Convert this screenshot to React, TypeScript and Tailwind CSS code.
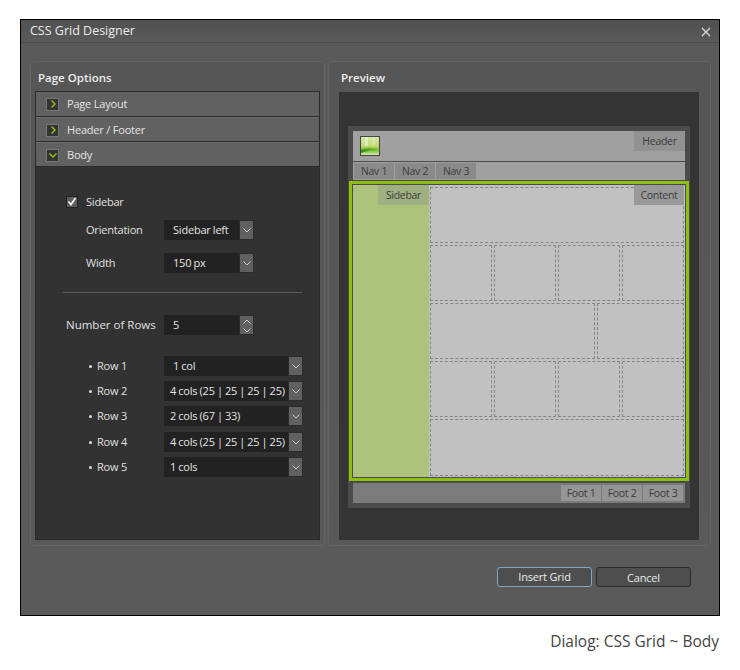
import React from 'react';

const Chevron = ({ dir, color = '#c8c8c8', w = 1 }: { dir: 'right' | 'down' | 'up'; color?: string; w?: number }) => {
  const d = dir === 'right' ? 'M3.5 1.5 L7 5 L3.5 8.5' : dir === 'down' ? 'M1.5 3.5 L5 7 L8.5 3.5' : 'M1.5 6.5 L5 3 L8.5 6.5';
  return (
    <svg width="10" height="10" viewBox="0 0 10 10" fill="none">
      <path d={d} stroke={color} strokeWidth={w} />
    </svg>
  );
};

const AccordionRow = ({ label, open }: { label: string; open?: boolean }) => (
  <div className="flex h-[25px] items-center gap-[8px] border-b border-b-[#2b2b2b] border-t border-t-[#6e6e6e] bg-[#616161] pl-[10px] first:border-t-0 not-first:pt-px">
    <div className="flex h-[13px] w-[13px] items-center justify-center border border-[#777] bg-[#333]">
      <Chevron dir={open ? 'down' : 'right'} color="#90c810" w={1.4} />
    </div>
    <span className="text-[#e4e4e4]">{label}</span>
  </div>
);

const Select = ({ value, width, pad = 6 }: { value: string; width: string; pad?: number }) => (
  <div className={`flex h-[20px] items-stretch bg-[#222] ${width}`}>
    <span className="flex-1 whitespace-nowrap leading-[19px] text-[#e4e4e4] [word-spacing:-0.5px]" style={{ paddingLeft: pad }}>
      {value}
    </span>
    <div className="flex w-[15px] items-center justify-center border border-[#2c2c2c] bg-[#606060]">
      <Chevron dir="down" />
    </div>
  </div>
);

const RowOption = ({ label, value, pad }: { label: string; value: string; pad?: number }) => (
  <div className="flex items-center">
    <span className="h-[3px] w-[3px] rounded-full bg-[#ddd]" />
    <span className="ml-[5px] w-[67px] text-[#e0e0e0]">{label}</span>
    <Select value={value} width="w-[139px]" pad={pad} />
  </div>
);

const Cell = ({ className = '' }: { className?: string }) => (
  <div className={`h-full border border-dashed border-[#858585] ${className}`} />
);

const Four = () => (
  <div className="flex h-[56px] gap-[2px]">
    <Cell className="flex-1" />
    <Cell className="flex-1" />
    <Cell className="flex-1" />
    <Cell className="flex-1" />
  </div>
);

const Tag = ({ label, className = '' }: { label: string; className?: string }) => (
  <div className={`flex items-center justify-center pt-px text-[10.5px] tracking-[-0.3px] text-[#3c3c3c] ${className}`}>{label}</div>
);

const Logo = () => (
  <svg width="18" height="18" viewBox="0 0 18 18" className="block">
    <defs>
      <linearGradient id="leaf" x1="0" y1="0" x2="0" y2="1">
        <stop offset="0" stopColor="#d4e8a4" />
        <stop offset="0.5" stopColor="#c0dc70" />
        <stop offset="0.72" stopColor="#74bc28" />
        <stop offset="1" stopColor="#d4e8b4" />
      </linearGradient>
      <linearGradient id="blade" x1="0" y1="0" x2="1" y2="0">
        <stop offset="0" stopColor="#2f9010" />
        <stop offset="1" stopColor="#8ac838" />
      </linearGradient>
    </defs>
    <rect width="18" height="18" fill="url(#leaf)" />
    <path d="M0 13 C5 11 11 11 18 12 L18 14 C11 13 6 14 0 16 Z" fill="url(#blade)" />
    <rect x="4" y="0" width="3" height="9" fill="#ffffff" opacity="0.4" />
    <rect x="11" y="0" width="3" height="8" fill="#ffffff" opacity="0.22" />
  </svg>
);

export default function App() {
  return (
    <div className="h-[670px] w-[740px] overflow-hidden bg-white pl-[20px] pt-[19px] font-['Open_Sans','Noto_Sans',sans-serif] text-[11px] tracking-[-0.2px]">
      <div className="flex h-[597px] w-[700px] flex-col border border-black bg-[#5a5a5a]">
        <div className="flex h-[23px] shrink-0 items-center justify-between border-b border-[#4c4c4c] bg-gradient-to-b from-[#505050] to-[#5a5a5a] pl-[9px] pr-[8px] pt-px">
          <span className="text-[12.5px] tracking-normal text-[#ececec]">CSS Grid Designer</span>
          <svg width="10" height="10" viewBox="0 0 10 10" fill="none">
            <path d="M1 1 L9 9 M9 1 L1 9" stroke="#dcdcdc" strokeWidth="1.2" />
          </svg>
        </div>

        <div className="flex gap-[3px] pl-[9px] pt-[18px]">
          {/* options */}
          <div className="flex h-[485px] w-[295px] flex-col rounded-[5px] border border-[#646464] bg-gradient-to-b from-[#565656] to-[#595959] px-[4px] pb-[5px]">
            <div className="flex h-[29px] shrink-0 items-center pl-[3px] pt-[2px] text-[11.5px] font-semibold tracking-normal text-[#ececec]">Page Options</div>
            <div className="flex flex-1 flex-col border border-[#2b2b2b] bg-[#323232]">
              <AccordionRow label="Page Layout" />
              <AccordionRow label="Header / Footer" />
              <AccordionRow label="Body" open />

              <div className="flex flex-1 flex-col pt-[29px]">
                <div className="ml-[30px] flex h-[12px] items-center gap-[8px]">
                  <div className="flex h-[12px] w-[12px] items-center justify-center border border-[#222] bg-[#5d5d5d]">
                    <svg width="10" height="10" viewBox="0 0 10 10" fill="none">
                      <path d="M1.5 4.5 L4 7.5 L8.5 1" stroke="#f0f0f0" strokeWidth="1.8" />
                    </svg>
                  </div>
                  <span className="text-[#e0e0e0]">Sidebar</span>
                </div>

                <div className="ml-[50px] mt-[12px] flex items-center">
                  <span className="w-[78px] text-[#e0e0e0]">Orientation</span>
                  <Select value="Sidebar left" width="w-[90px]" pad={9} />
                </div>
                <div className="ml-[50px] mt-[13px] flex items-center">
                  <span className="w-[78px] text-[#e0e0e0]">Width</span>
                  <Select value="150 px" width="w-[90px]" pad={9} />
                </div>

                <div className="ml-[27px] mt-[19px] h-px w-[239px] bg-[#5e5e5e]" />

                <div className="ml-[30px] mt-[22px] flex items-center">
                  <span className="w-[98px] text-[11.5px] tracking-normal text-[#e0e0e0]">Number of Rows</span>
                  <div className="flex h-[20px] w-[90px] bg-[#222]">
                    <span className="flex-1 pl-[9px] leading-[19px] text-[#e4e4e4]">5</span>
                    <div className="flex w-[15px] flex-col items-center justify-center border border-[#2c2c2c] bg-[#606060]">
                      <div className="h-[8px] overflow-hidden"><Chevron dir="up" /></div>
                      <div className="h-[9px] overflow-hidden"><Chevron dir="down" /></div>
                    </div>
                  </div>
                </div>

                <div className="ml-[53px] mt-[21px] flex flex-col gap-[5px]">
                  <RowOption label="Row 1" value="1 col" pad={9} />
                  <RowOption label="Row 2" value="4 cols (25 | 25 | 25 | 25)" />
                  <RowOption label="Row 3" value="2 cols (67 | 33)" />
                  <div className="mt-[1px]">
                    <RowOption label="Row 4" value="4 cols (25 | 25 | 25 | 25)" />
                  </div>
                  <RowOption label="Row 5" value="1 cols" />
                </div>
              </div>
            </div>
          </div>

          {/* preview */}
          <div className="flex h-[485px] w-[383px] flex-col rounded-[5px] border border-[#646464] bg-gradient-to-b from-[#565656] to-[#595959] pl-[10px]">
            <div className="flex h-[30px] shrink-0 items-center pl-[2px] pt-[2px] text-[11.5px] font-semibold tracking-normal text-[#ececec]">Preview</div>
            <div className="h-[448px] w-[360px] bg-[#343434] pl-[9px] pt-[34px]">
              <div className="flex h-[382px] w-[342px] flex-col bg-[#4b4b4b] pt-[5px]">
                <div className="mx-[5px] w-[332px] bg-[#a0a0a0]">
                  <div className="flex h-[31px] justify-between border-b border-[#4b4b4b]">
                    <div className="ml-[7px] mt-[5px] h-[20px] border border-[#444]"><Logo /></div>
                    <Tag label="Header" className="h-[20px] w-[51px] bg-[#929292]" />
                  </div>
                  <div className="flex h-[18px] gap-px pl-px pt-px">
                    <Tag label="Nav 1" className="h-[16px] w-[40px] bg-[#8a8a8a]" />
                    <Tag label="Nav 2" className="h-[16px] w-[40px] bg-[#8a8a8a]" />
                    <Tag label="Nav 3" className="h-[16px] w-[40px] bg-[#8a8a8a]" />
                  </div>
                </div>

                <div className="ml-px mt-px flex h-[300px] w-[340px] border-[3px] border-[#8cc00c] p-px">
                  <div className="flex w-[76px] shrink-0 justify-end bg-[#adc37c]">
                    <Tag label="Sidebar" className="h-[20px] w-[51px] bg-[#a0b080]" />
                  </div>
                  <div className="relative flex flex-1 flex-col gap-[2px] bg-[#c1c1c1] pb-px pl-px pr-px pt-[2px]">
                    <Tag label="Content" className="absolute right-px top-0 h-[20px] w-[50px] bg-[#999]" />
                    <Cell className="!h-[56px]" />
                    <Four />
                    <div className="flex h-[56px] gap-[2px]">
                      <Cell className="w-[165px]" />
                      <Cell className="flex-1" />
                    </div>
                    <Four />
                    <Cell className="!h-[57px]" />
                  </div>
                </div>

                <div className="mx-[5px] mt-[2px] flex h-[20px] w-[332px] items-center justify-end gap-px bg-[#7b7b7b] pr-[2px]">
                  <Tag label="Foot 1" className="h-[16px] w-[40px] bg-[#959595]" />
                  <Tag label="Foot 2" className="h-[16px] w-[40px] bg-[#959595]" />
                  <Tag label="Foot 3" className="h-[16px] w-[40px] bg-[#959595]" />
                </div>
              </div>
            </div>
          </div>
        </div>

        <div className="ml-[476px] mt-[21px] flex gap-[4px]">
          <button className="h-[20px] w-[95px] rounded-[3px] border border-[#86a6c0] bg-[#4e4e4e] text-[11px] leading-[16px] text-[#ececec]">Insert Grid</button>
          <button className="h-[20px] w-[95px] rounded-[3px] border border-[#2c2c2c] bg-[#4e4e4e] pt-[2px] text-[11px] leading-[16px] text-[#ececec]">Cancel</button>
        </div>
      </div>
      <div className="mt-[14px] w-[699px] text-right text-[15.5px] leading-[22px] tracking-normal text-[#444]">Dialog: CSS Grid ~ Body</div>
    </div>
  );
}
